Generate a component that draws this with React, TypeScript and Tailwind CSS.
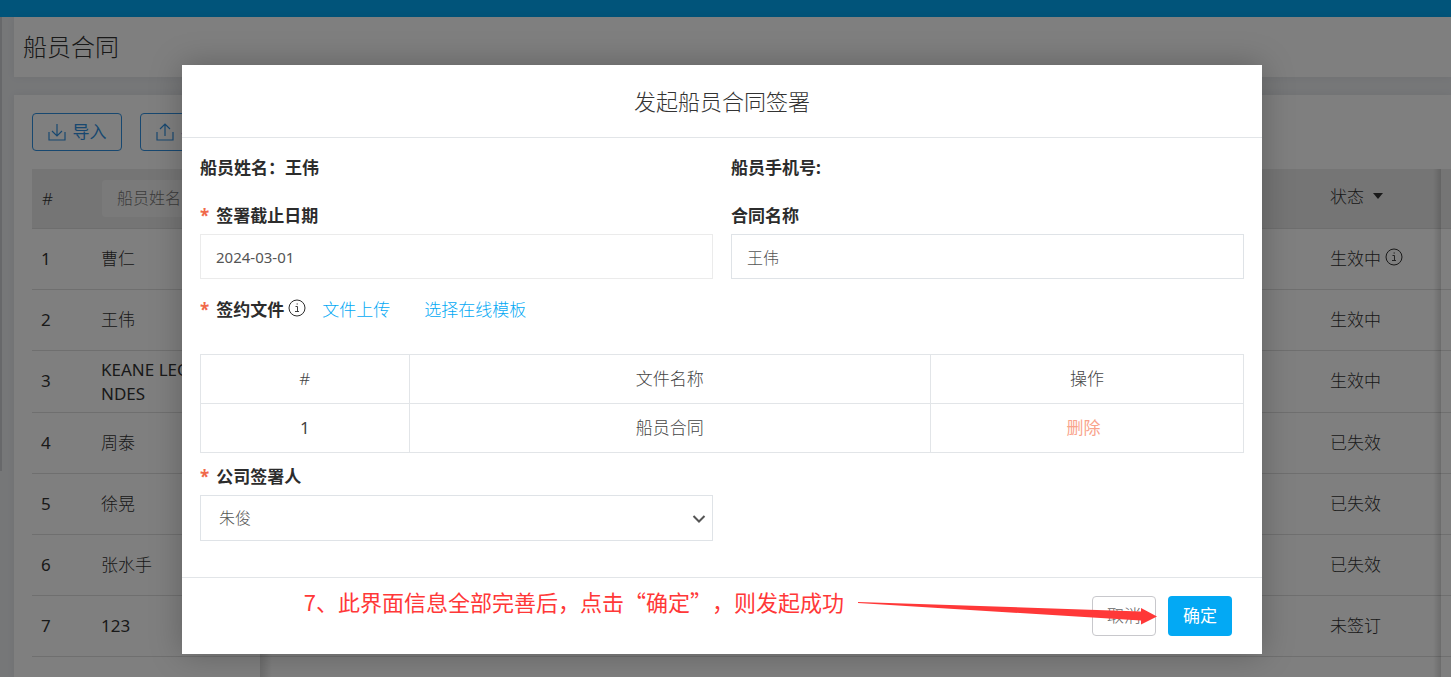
import { useState, type ReactNode } from 'react';

type Contract = { name: ReactNode; status: string; info?: boolean };

const CONTRACTS: Contract[] = [
  { name: '曹仁', status: '生效中', info: true },
  { name: '王伟', status: '生效中' },
  { name: <>KEANE LEO<br />NDES</>, status: '生效中' },
  { name: '周泰', status: '已失效' },
  { name: '徐晃', status: '已失效' },
  { name: '张水手', status: '已失效' },
  { name: '123', status: '未签订' },
];

const FILES = [{ id: 1, name: '船员合同' }];

const LABEL = 'block text-[17px] leading-6 font-bold text-[#2c2c2c]';

export default function App() {
  return (
    <div
      lang="zh-CN"
      className="relative h-screen overflow-hidden bg-[#eceef1] font-['Noto_Sans','Noto_Sans_CJK_SC',sans-serif] text-[17px] font-light text-[#333]"
    >
      <ContractPage />
      <div className="absolute inset-0 flex items-start justify-center bg-black/50 pt-[65px] pr-[7px]">
        <SignDialog />
      </div>
    </div>
  );
}

function ContractPage() {
  return (
    <div className="flex h-full flex-col">
      <div className="h-[17px] shrink-0 bg-[#03a9f4]" />
      <div className="relative flex min-h-0 flex-1 flex-col pl-[14px]">
        <div className="absolute top-0 left-0 h-[454px] w-0.5 bg-[#cfd1d4]" />
        <header className="flex h-[60px] shrink-0 items-center bg-white pl-[9px] shadow-[0_0_8px_rgba(0,0,0,0.06)]">
          <h1 className="text-2xl leading-7">船员合同</h1>
        </header>
        <main className="mt-[18px] flex min-h-0 flex-1 flex-col overflow-hidden bg-white pt-[18px] pl-[18px] shadow-[0_0_8px_rgba(0,0,0,0.06)]">
          <div className="flex shrink-0 gap-[18px]">
            <ToolButton label="导入">
              <path d="M9 1v12M4 8l5 5 5-5" />
            </ToolButton>
            <ToolButton label="导出">
              <path d="M9 13V1M4 6l5-5 5 5" />
            </ToolButton>
          </div>
          <div className="relative mt-[18px] min-h-0 flex-1 overflow-hidden">
            <ContractTable />
            <div className="absolute inset-y-0 left-[228px] w-3 bg-linear-to-r from-black/15 to-transparent" />
            <div className="absolute inset-y-0 right-[10px] w-2 bg-linear-to-l from-black/15 to-transparent" />
          </div>
        </main>
      </div>
    </div>
  );
}

function ToolButton({ label, children }: { label: string; children: ReactNode }) {
  return (
    <button className="flex h-[38px] w-[90px] items-center justify-center gap-[7px] rounded border border-[#3090e0] font-normal text-[#3090e0]">
      <svg width="18" height="18" viewBox="0 0 18 18" fill="none" stroke="currentColor" strokeWidth="1.2">
        {children}
        <path d="M1 9v8h16V9" />
      </svg>
      {label}
    </button>
  );
}

function ContractTable() {
  return (
    <table className="w-[calc(100%+110px)] table-fixed border-collapse text-left">
      <colgroup>
        <col className="w-[60px]" />
        <col className="w-[168px]" />
        <col />
        <col className="w-[121px]" />
        <col className="w-[120px]" />
      </colgroup>
      <thead>
        <tr className="h-[59px] border-b border-[#dcdcdc] bg-[#ebebeb]">
          <th className="pl-[10px] font-light">#</th>
          <th className="px-[10px] font-light">
            <input
              aria-label="船员姓名"
              placeholder="船员姓名"
              className="block h-[37px] w-full rounded bg-white/50 px-[15px] text-base placeholder:text-[#777]"
            />
          </th>
          <th />
          <th className="pl-[10px] font-light">
            <span className="flex items-center gap-[9px] pb-1">
              状态
              <svg width="10" height="6" viewBox="0 0 10 6" fill="currentColor">
                <path d="M0 0h10L5 6z" />
              </svg>
            </span>
          </th>
          <th />
        </tr>
      </thead>
      <tbody>
        {CONTRACTS.map((c, i) => (
          <tr key={i} className="h-[61px] border-b border-[#dedede] leading-6">
            <td className="pl-[9px] font-normal">{i + 1}</td>
            <td className="pt-[7px] pb-1.5 pl-[9px]">
              {typeof c.name === 'string' && !/^\d/.test(c.name) ? c.name : <span className="font-normal">{c.name}</span>}
            </td>
            <td />
            <td className="pl-[10px]">
              <span className="flex items-center gap-1">
                {c.status}
                {c.info && <InfoIcon />}
              </span>
            </td>
            <td />
          </tr>
        ))}
      </tbody>
    </table>
  );
}

function InfoIcon() {
  return (
    <svg width="18" height="18" viewBox="0 0 18 18" fill="none" stroke="currentColor" className="mb-1 shrink-0">
      <circle cx="9" cy="9" r="8" />
      <path d="M7.5 7.5H9.5V12.5M7 12.5h4" strokeWidth="0.9" />
      <path d="M8.6 5h1.2" strokeWidth="1.2" />
    </svg>
  );
}

function Required() {
  return <span className="mr-[7px] text-[#f0694a]">*</span>;
}

function SignDialog() {
  const [date, setDate] = useState('2024-03-01');
  const [title, setTitle] = useState('王伟');

  return (
    <div role="dialog" aria-labelledby="dialog-title" className="w-full max-w-[1080px] bg-white shadow-[0_0_30px_rgba(0,0,0,0.25)]">
      <h2 id="dialog-title" className="flex h-[73px] items-center justify-center border-b border-[#e2e5e8] text-[22px]">
        发起船员合同签署
      </h2>

      <div className="px-[18px] pt-[18px] pb-9">
        <div className="grid grid-cols-2 gap-x-[18px]">
          <p className={LABEL}>船员姓名：王伟</p>
          <p className={LABEL}>船员手机号:</p>
          <div className="mt-6">
            <label htmlFor="deadline" className={LABEL}>
              <Required />签署截止日期
            </label>
            <input
              id="deadline"
              value={date}
              onChange={(e) => setDate(e.target.value)}
              className="mt-[6px] block h-[45px] w-full border border-[#ebebeb] px-[15px] text-[15px] font-normal text-[#555]"
            />
          </div>
          <div className="mt-6">
            <label htmlFor="title" className={LABEL}>合同名称</label>
            <input
              id="title"
              value={title}
              onChange={(e) => setTitle(e.target.value)}
              className="mt-[6px] block h-[45px] w-full border border-[#dfe3e7] px-[15px] text-base text-[#555]"
            />
          </div>
        </div>

        <div className="mt-[18px] flex items-center">
          <span className={LABEL}><Required />签约文件</span>
          <span className="ml-1 text-[#2c2c2c]"><InfoIcon /></span>
          <a href="#upload" className="ml-4 text-[#03a9f4]">文件上传</a>
          <a href="#template" className="ml-[34px] text-[#03a9f4]">选择在线模板</a>
        </div>

        <table className="mt-[31px] w-full table-fixed border-collapse text-center text-[#444]">
          <thead>
            <tr className="h-[49px]">
              <th className="w-1/5 border border-[#e2e5e8] font-light">#</th>
              <th className="w-1/2 border border-[#e2e5e8] font-light">文件名称</th>
              <th className="border border-[#e2e5e8] font-light">操作</th>
            </tr>
          </thead>
          <tbody>
            {FILES.map((f) => (
              <tr key={f.id} className="h-[49px]">
                <td className="border border-[#e2e5e8] font-normal">{f.id}</td>
                <td className="border border-[#e2e5e8]">{f.name}</td>
                <td className="border border-[#e2e5e8]">
                  <button className="mr-[7px] font-normal text-[#f9a48c]">删除</button>
                </td>
              </tr>
            ))}
          </tbody>
        </table>

        <div className="mt-3 grid grid-cols-2 gap-x-[18px]">
          <div>
            <label htmlFor="signer" className={LABEL}>
              <Required />公司签署人
            </label>
            <div className="relative mt-[6px]">
              <select
                id="signer"
                className="block h-[46px] w-full appearance-none border border-[#dfe3e7] bg-white px-[18px] text-base text-[#555]"
              >
                <option>朱俊</option>
              </select>
              <svg
                width="14"
                height="8"
                viewBox="0 0 14 8"
                fill="none"
                stroke="#555"
                strokeWidth="2"
                className="pointer-events-none absolute top-5 right-[7px]"
              >
                <path d="M1.5 1L7 6.5 12.5 1" />
              </svg>
            </div>
          </div>
        </div>
      </div>

      <footer className="relative flex h-[77px] items-start justify-end gap-3 border-t border-[#e2e5e8] pt-[18px] pr-[30px]">
        <button className="h-10 w-16 rounded border border-[#c8c8cc] text-[#666]">取消</button>
        <button className="h-10 w-16 rounded bg-[#03a9f4] font-normal text-white">确定</button>
        <Annotation />
      </footer>
    </div>
  );
}

// hint text with an arrow that ends at the confirm button
function Annotation() {
  return (
    <div className="pointer-events-none absolute top-[7px] right-[105px] flex gap-[14px] text-[#ff3838]">
      <p className="font-['Noto_Sans_CJK_SC',sans-serif] text-[22px] leading-8 font-normal whitespace-nowrap [text-spacing-trim:space-all]">
        7、此界面信息全部完善后，点击“确定”，则发起成功
      </p>
      <svg width="299" height="40" viewBox="0 0 299 40" fill="currentColor">
        <path d="M0 17L283 26.5V23L299 31.5L283 39.5V35.5L0 18z" />
      </svg>
    </div>
  );
}
